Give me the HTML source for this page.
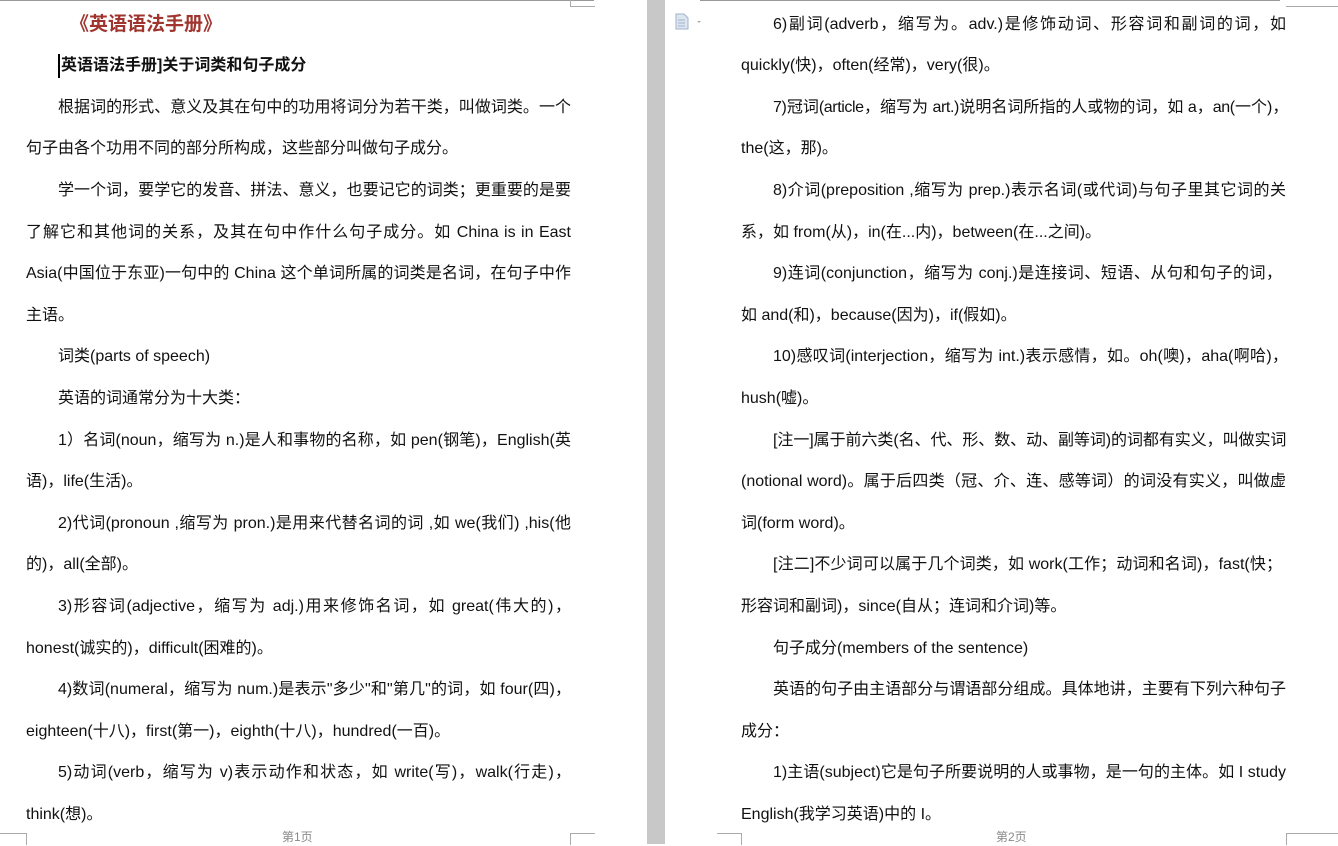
<!DOCTYPE html><html><head><meta charset="utf-8"><style>
body{margin:0;width:1338px;height:844px;background:#fff;position:relative;overflow:hidden;font-family:"Liberation Sans","Noto Sans CJK SC",sans-serif;color:#111}
.w{position:absolute;left:0;top:2px;width:1338px;height:844px}
.l{position:absolute;height:24px;line-height:24px;font-size:16px;white-space:nowrap}
.j{text-align:justify;text-align-last:justify}
.t{letter-spacing:-0.4px}
.gap{position:absolute;left:647px;top:0;width:18px;height:844px;background:#c8c8c8}
.c{position:absolute;border-color:#aaa;border-style:solid;border-width:0}
.f{position:absolute;top:828px;font-size:12px;color:#888}
</style></head><body>
<div class="gap"></div>
<div class="c" style="left:0;top:0;width:594px;border-top-width:1px;border-color:#999"></div>
<div class="c" style="left:570px;top:0;width:24px;height:6px;border-bottom-width:1px;border-left-width:1px"></div>
<div class="c" style="left:700px;top:0;width:580px;border-top-width:1px;border-color:#999"></div>
<div class="c" style="left:1286px;top:0;width:52px;height:6px;border-bottom-width:1px"></div>
<div class="c" style="left:570px;top:833px;width:24px;height:11px;border-top-width:1px;border-left-width:1px"></div>
<div class="c" style="left:0;top:833px;width:26px;height:11px;border-top-width:1px;border-right-width:1px"></div>
<div class="c" style="left:717px;top:833px;width:24px;height:11px;border-top-width:1px;border-right-width:1px"></div>
<div class="c" style="left:1286px;top:833px;width:52px;height:11px;border-top-width:1px;border-left-width:1px"></div>
<div class="f" style="left:282px">第1页</div>
<div class="f" style="left:996px">第2页</div>
<svg style="position:absolute;left:675px;top:13px" width="30" height="18"><path d="M1 1h8l4 4v11H1z" fill="#dde5f0" stroke="#9fb3cc"/><path d="M3 7h7M3 10h7M3 13h7" stroke="#9fb3cc"/><path d="M22 8l2 2 2-2z" fill="#aaa"/></svg>
<div class="w">
<div class="l" style="left:70px;top:11px;font-size:19px;font-weight:bold;color:#a0352f">《英语语法手册》</div>
<div class="l" style="left:58px;top:52px;font-weight:bold;border-left:2px solid #000;padding-left:1px">英语语法手册]关于词类和句子成分</div>
<div class="l j" style="left:58px;top:94px;width:513px">根据词的形式、意义及其在句中的功用将词分为若干类，叫做词类。一个</div>
<div class="l" style="left:26px;top:135px">句子由各个功用不同的部分所构成，这些部分叫做句子成分。</div>
<div class="l j" style="left:58px;top:177px;width:513px">学一个词，要学它的发音、拼法、意义，也要记它的词类；更重要的是要</div>
<div class="l j" style="left:26px;top:219px;width:545px">了解它和其他词的关系，及其在句中作什么句子成分。如 China is in East</div>
<div class="l j" style="left:26px;top:260px;width:545px">Asia(中国位于东亚)一句中的 China 这个单词所属的词类是名词，在句子中作</div>
<div class="l" style="left:26px;top:302px">主语。</div>
<div class="l" style="left:58px;top:343px">词类(parts of speech)</div>
<div class="l" style="left:58px;top:385px">英语的词通常分为十大类：</div>
<div class="l j" style="left:58px;top:427px;width:513px">1）名词(noun，缩写为 n.)是人和事物的名称，如 pen(钢笔)，English(英</div>
<div class="l" style="left:26px;top:468px">语)，life(生活)。</div>
<div class="l j" style="left:58px;top:510px;width:513px">2)代词(pronoun ,缩写为 pron.)是用来代替名词的词 ,如 we(我们) ,his(他</div>
<div class="l" style="left:26px;top:551px">的)，all(全部)。</div>
<div class="l j" style="left:58px;top:593px;width:513px">3)形容词(adjective，缩写为 adj.)用来修饰名词，如 great(伟大的)，</div>
<div class="l" style="left:26px;top:635px">honest(诚实的)，difficult(困难的)。</div>
<div class="l j" style="left:58px;top:676px;width:513px">4)数词(numeral，缩写为 num.)是表示"多少"和"第几"的词，如 four(四)，</div>
<div class="l" style="left:26px;top:718px">eighteen(十八)，first(第一)，eighth(十八)，hundred(一百)。</div>
<div class="l j" style="left:58px;top:759px;width:513px">5)动词(verb，缩写为 v)表示动作和状态，如 write(写)，walk(行走)，</div>
<div class="l" style="left:26px;top:801px">think(想)。</div>

<div class="l j" style="left:773px;top:11px;width:513px">6)副词(adverb，缩写为。adv.)是修饰动词、形容词和副词的词，如</div>
<div class="l" style="left:741px;top:52px">quickly(快)，often(经常)，very(很)。</div>
<div class="l j t" style="left:773px;top:94px;width:515px">7)冠词(article，缩写为 art.)说明名词所指的人或物的词，如 a，an(一个)，</div>
<div class="l" style="left:741px;top:135px">the(这，那)。</div>
<div class="l j" style="left:773px;top:177px;width:513px">8)介词(preposition ,缩写为 prep.)表示名词(或代词)与句子里其它词的关</div>
<div class="l" style="left:741px;top:219px">系，如 from(从)，in(在...内)，between(在...之间)。</div>
<div class="l j" style="left:773px;top:260px;width:509px">9)连词(conjunction，缩写为 conj.)是连接词、短语、从句和句子的词，</div>
<div class="l" style="left:741px;top:302px">如 and(和)，because(因为)，if(假如)。</div>
<div class="l j" style="left:773px;top:343px;width:515px">10)感叹词(interjection，缩写为 int.)表示感情，如。oh(噢)，aha(啊哈)，</div>
<div class="l" style="left:741px;top:385px">hush(嘘)。</div>
<div class="l j t" style="left:773px;top:427px;width:513px">[注一]属于前六类(名、代、形、数、动、副等词)的词都有实义，叫做实词</div>
<div class="l j" style="left:741px;top:468px;width:545px">(notional word)。属于后四类（冠、介、连、感等词）的词没有实义，叫做虚</div>
<div class="l" style="left:741px;top:510px">词(form word)。</div>
<div class="l j" style="left:773px;top:551px;width:509px">[注二]不少词可以属于几个词类，如 work(工作；动词和名词)，fast(快；</div>
<div class="l" style="left:741px;top:593px">形容词和副词)，since(自从；连词和介词)等。</div>
<div class="l" style="left:773px;top:635px">句子成分(members of the sentence)</div>
<div class="l j" style="left:773px;top:676px;width:513px">英语的句子由主语部分与谓语部分组成。具体地讲，主要有下列六种句子</div>
<div class="l" style="left:741px;top:718px">成分：</div>
<div class="l j" style="left:773px;top:759px;width:513px">1)主语(subject)它是句子所要说明的人或事物，是一句的主体。如 I study</div>
<div class="l" style="left:741px;top:801px">English(我学习英语)中的 I。</div>
</div>
</body></html>
